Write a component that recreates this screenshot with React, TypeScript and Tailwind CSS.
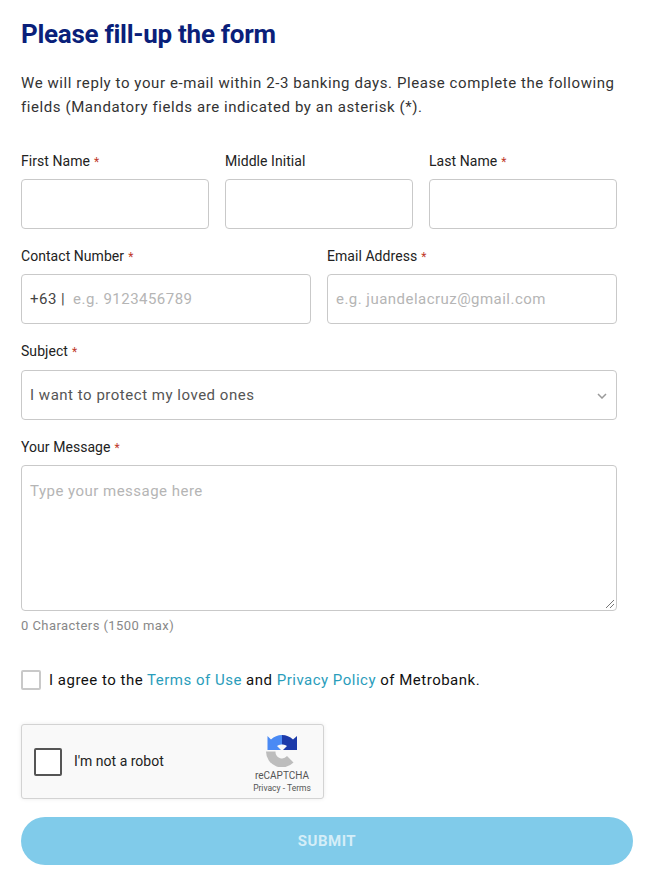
import React from "react";

const font = { fontFamily: "Roboto, sans-serif" };

function Label({ text, required = true }: { text: string; required?: boolean }) {
  return (
    <label className="block h-[20px] text-[14px] leading-[20px] tracking-[0.05px] text-[#222]">
      {text}
      {required && <span className="ml-[1px] text-[12px] text-[#c0392b]"> *</span>}
    </label>
  );
}

function Box({ children, className = "" }: { children?: React.ReactNode; className?: string }) {
  return (
    <div className={`mt-[8px] flex h-[50px] items-center rounded-[4px] border border-[#c9c9c9] bg-white px-[8px] pt-[1px] text-[15px] tracking-[0.47px] ${className}`}>
      {children}
    </div>
  );
}

function RecaptchaLogo() {
  return (
    <svg width="32" height="32" viewBox="0 0 32 32">
      <path d="M0 16.500A16 16 0 0 0 27.500 27.500L21 21A6.500 6.500 0 0 1 9.500 16.500Z" fill="#bdbdbd" />
      <path d="M16 0A16 16 0 0 0 5 4.500L1.500 1V15H15L11 11A6.500 6.500 0 0 1 16 9.500Z" fill="#4a8af4" />
      <path d="M16 0A16 16 0 0 1 27 4.500L31 1V15H17L21 11A6.500 6.500 0 0 0 16 9.500Z" fill="#1c3aa9" />
    </svg>
  );
}

export default function App() {
  return (
    <div className="min-h-[875px] w-[652px] bg-white pl-[21px] pr-[19px] pt-[18px]" style={font}>
      <h1 className="h-[32px] text-[26px] font-bold leading-[32px] tracking-[-0.28px] text-[#0a1f7a]">Please fill-up the form</h1>
      <p className="mt-[21px] w-[600px] text-[15px] leading-[24px] tracking-[0.58px] text-[#333]">
        We will reply to your e-mail within 2-3 banking days. Please complete the following fields (Mandatory fields are indicated by an asterisk (*).
      </p>

      <div className="mt-[32px] w-[596px]">
        <div className="grid grid-cols-3 gap-x-[16px]">
          <div><Label text="First Name" /><Box /></div>
          <div><Label text="Middle Initial" required={false} /><Box /></div>
          <div><Label text="Last Name" /><Box /></div>
        </div>

        <div className="mt-[17px] grid grid-cols-2 gap-x-[16px]">
          <div>
            <Label text="Contact Number" />
            <Box>
              <span className="text-[#444]">+63 |</span>
              <span className="ml-[8px] text-[#b5b5b5]">e.g. 9123456789</span>
            </Box>
          </div>
          <div>
            <Label text="Email Address" />
            <Box><span className="text-[#b5b5b5]">e.g. juandelacruz@gmail.com</span></Box>
          </div>
        </div>

        <div className="mt-[17px]">
          <Label text="Subject" />
          <Box className="mt-[9px] justify-between">
            <span className="tracking-[0.52px] text-[#555]">I want to protect my loved ones</span>
            <svg width="10" height="6" viewBox="0 0 10 6" className="mr-[1px]" fill="none" stroke="#9a9a9a" strokeWidth="1.5">
              <path d="M1 1l4 4 4-4" />
            </svg>
          </Box>
        </div>

        <div className="mt-[17px]">
          <Label text="Your Message" />
          <div className="relative mt-[8px] h-[146px] rounded-[4px] border border-[#c9c9c9] bg-white px-[8px] pt-[14px] text-[15px] leading-[22px] tracking-[0.48px] text-[#b5b5b5]">
            Type your message here
            <svg width="10" height="10" viewBox="0 0 10 10" className="absolute bottom-[1px] right-[1px]" stroke="#777" strokeWidth="1">
              <path d="M1 9 9 1M5 9l4-4" />
            </svg>
          </div>
          <div className="mt-[6px] text-[13px] leading-[18px] tracking-[0.44px] text-[#888]">0 Characters (1500 max)</div>
        </div>

        <div className="mt-[33px] flex h-[24px] items-center">
          <span className="h-[20px] w-[20px] rounded-[2px] border-2 border-[#c9c9c9] bg-white" />
          <span className="ml-[8px] text-[15px] tracking-[0.5px] text-[#111]">
            I agree to the <span className="text-[#2a9dbb]">Terms of Use</span> and <span className="text-[#2a9dbb]">Privacy Policy</span> of Metrobank.
          </span>
        </div>
      </div>

      <div className="mt-[32px] flex h-[75px] w-[303px] items-center rounded-[3px] border border-[#d3d3d3] bg-[#f9f9f9] pl-[12px] shadow-[0_0_4px_rgba(0,0,0,0.08)]">
        <span className="h-[28px] w-[28px] rounded-[2px] border-2 border-[#555] bg-white" />
        <span className="ml-[12px] text-[14px] text-[#222]">I'm not a robot</span>
        <div className="ml-auto mr-[12px] mt-[10px] flex w-[58px] flex-col items-center self-start">
          <RecaptchaLogo />
          <span className="mt-[2px] text-[10px] leading-[13px] text-[#555]">reCAPTCHA</span>
          <span className="whitespace-nowrap text-[8.500px] leading-[13px] text-[#555]">Privacy - Terms</span>
        </div>
      </div>

      <button className="mt-[18px] block h-[48px] w-[612px] rounded-[24px] bg-[#80cbea] text-center text-[15px] font-bold tracking-[0.5px] text-[#d5eef8]">
        SUBMIT
      </button>
    </div>
  );
}
